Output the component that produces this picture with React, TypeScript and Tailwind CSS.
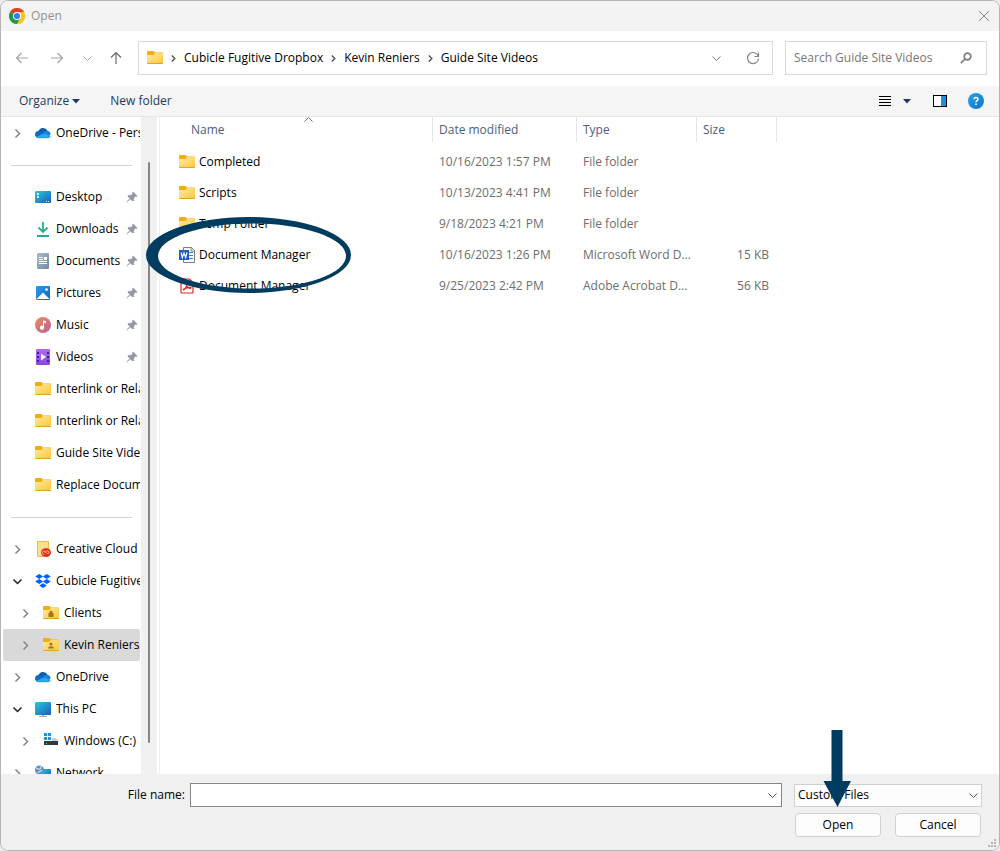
import type { ReactNode } from "react";

type IconName =
  | "onedrive"
  | "desktop"
  | "downloads"
  | "documents"
  | "pictures"
  | "music"
  | "videos"
  | "folder"
  | "creativeCloud"
  | "dropbox"
  | "lockedFolder"
  | "userFolder"
  | "pc"
  | "drive"
  | "network"
  | "word"
  | "pdf";

const folderShape = (
  <>
    <path d="M0 2a1 1 0 0 1 1-1h5.500l1.500 1.500h7a1 1 0 0 1 1 1V5H0z" fill="#f3ae0d" />
    <path d="M0 5h6.500L8 3h7a1 1 0 0 1 1 1v9a1 1 0 0 1-1 1H1a1 1 0 0 1-1-1z" fill="url(#folderFill)" />
    <path d="M0 13h16a1 1 0 0 1-1 1H1a1 1 0 0 1-1-1z" fill="#e5a323" />
  </>
);

const icons: Record<IconName, ReactNode> = {
  onedrive: (
    <>
      <path d="M3.500 6.500A4.800 4.800 0 0 1 12.500 5.800L9 9 4 10z" fill="#0a5cad" />
      <path d="M0 9.600a3.700 3.700 0 0 1 6-2.900L11 9.500 3 13a3.500 3.500 0 0 1-3-3.400z" fill="#1069c0" />
      <path d="M7.500 8.500C8.500 6 10.500 5.300 12.500 5.800A3.700 3.700 0 0 1 15.500 9.500L13 12z" fill="#1582d8" />
      <path d="M1 12 8 8.800c1-.5 2-.5 3 0l4.600 2.200c-.2 1.300-1.200 2.300-2.800 2.300H3.700C2.600 13.300 1.600 12.800 1 12z" fill="#2aa6ee" />
    </>
  ),
  desktop: (
    <>
      <rect y="2" width="16" height="12" rx="1" fill="url(#screenFill)" />
      <path d="M2 4h2v2H2zM2 7h2v2H2z" fill="#dff6ff" />
      <path d="M11 12h1v1h-1zM13 12h1v1h-1z" fill="#dff6ff" />
    </>
  ),
  downloads: (
    <path d="M8 1v10M3.500 6.500 8 11l4.500-4.500M2 15h12" fill="none" stroke="#22b08c" strokeWidth="1.800" />
  ),
  documents: (
    <>
      <rect x="2" width="12" height="16" rx="1" fill="url(#documentFill)" />
      <path d="M4 4h4v1H4zM4 6h4v1H4zM9 4h3v3H9zM4 8h8v1H4zM4 10h8v1H4z" fill="#fff" />
    </>
  ),
  pictures: (
    <>
      <rect x="1" y="1" width="14" height="14" rx="1" fill="url(#pictureFill)" />
      <path d="m1.500 14 5.800-5.800a1 1 0 0 1 1.400 0L14.500 14z" fill="#fff" />
      <circle cx="11.500" cy="4.500" r="1.300" fill="#fff" />
    </>
  ),
  music: (
    <>
      <circle cx="8" cy="8" r="8" fill="url(#musicFill)" />
      <path d="M8 3.500 11 4v2l-2-.3v5A2 2 0 1 1 8 9z" fill="#fff" />
    </>
  ),
  videos: (
    <>
      <rect x="1" width="14" height="16" rx="1" fill="url(#videoFill)" />
      <path d="M2 3h2v2H2zM2 7h2v2H2zM2 11h2v2H2zM12 3h2v2h-2zM12 7h2v2h-2zM12 11h2v2h-2z" fill="#4a1f8d" />
      <path d="M6 4.500 11 8l-5 3.500z" fill="#fff" />
    </>
  ),
  folder: folderShape,
  creativeCloud: (
    <>
      <path d="M2.500.500h11v15h-11z" fill="#fce08c" stroke="#e8bd4e" />
      <ellipse cx="11" cy="11.500" rx="5" ry="4.300" fill="#e2231a" />
      <path
        d="M9.500 13.500c-2.500 0-3-3-.7-3.500 1.500-.3 2.200 1.800 3.200 2.500 1.600 1 3-1.200 1.500-2.300-1.500-1-3 .3-3.500 1.300"
        fill="none"
        stroke="#ffd9a8"
        strokeWidth=".9"
      />
    </>
  ),
  dropbox: (
    <path
      d="m4.200 1 4 2.500-4 2.500-4-2.500zM11.800 1l4 2.500-4 2.500-4-2.500zM4.200 6l4 2.500-4 2.500-4-2.500zM11.800 6l4 2.500-4 2.500-4-2.500zM8 10.300l3.800 2.300L8 15l-3.800-2.400z"
      fill="#0061fe"
    />
  ),
  lockedFolder: (
    <>
      {folderShape}
      <path d="M5.500 8H6.500V7a1.500 1.500 0 0 1 3 0v1h1v4h-5z" fill="#a8760d" />
    </>
  ),
  userFolder: (
    <>
      {folderShape}
      <circle cx="8" cy="7" r="1.600" fill="#a8760d" />
      <path d="M5 11.500c0-3 6-3 6 0z" fill="#a8760d" />
    </>
  ),
  pc: (
    <>
      <path d="M7 12h2v3H7z" fill="#8fa3ad" />
      <path d="M4 15h8v1H4z" fill="#aab6bd" />
      <rect y="1" width="16" height="13" rx="1" fill="url(#screenFill)" />
    </>
  ),
  drive: (
    <>
      <path d="M1 0h3v3H1zM5 0h3v3H5zM1 4h3v3H1zM5 4h3v3H5z" fill="#1c93e0" />
      <path d="M9 5h4l2 3H2V8h7z" fill="#c9cdd0" />
      <rect x="1" y="8" width="14" height="4" fill="#33383c" />
      <path d="M3 10h1v1H3z" fill="#5fe06a" />
    </>
  ),
  network: (
    <>
      <rect x="4" y="4" width="12" height="9" fill="url(#screenFill)" />
      <circle cx="4.500" cy="5" r="4.500" fill="#5a93bd" />
      <path d="M1 3c2 0 2 2 4 1s0-3 2-3M3 8c0-2 3-1 4-3" fill="none" stroke="#cfe3ef" strokeWidth="1.200" />
    </>
  ),
  word: (
    <>
      <path d="M4.500.500h8l3 3v12h-11z" fill="#fff" stroke="#7d7d7d" />
      <path d="M12 .500V4h3.500" fill="none" stroke="#7d7d7d" />
      <path d="M9 5.500h5M9 8.500h5M9 11.500h5" stroke="#2f8be0" />
      <rect y="3" width="10" height="10" fill="#1f5cbf" />
      <path d="m2 5.500 1.300 5L5 6l1.700 4.500 1.300-5" fill="none" stroke="#fff" strokeWidth="1.200" />
    </>
  ),
  pdf: (
    <>
      <path d="M3 1h7.500L14 4.500V14a1 1 0 0 1-1 1H3a1 1 0 0 1-1-1V2a1 1 0 0 1 1-1z" fill="#fff" stroke="#e2231a" strokeWidth="1.200" />
      <path
        d="M4.500 12c1.500-.5 3.800-4.300 3.500-6.200-.2-1-1-.6-.7.400.5 2 2.300 4 4 4.100 1.100 0 .9-1-.3-1-2 0-4.500.7-6 1.700-.6.500-.8.900-.5 1z"
        fill="none"
        stroke="#e2231a"
        strokeWidth="1.200"
      />
    </>
  ),
};

function Icon({ name }: { name: IconName }) {
  return (
    <svg viewBox="0 0 16 16" className="h-4 w-4 shrink-0" aria-hidden="true">
      {icons[name]}
    </svg>
  );
}

function Gradients() {
  return (
    <svg className="absolute h-0 w-0" aria-hidden="true">
      <defs>
        <linearGradient id="folderFill" x2="1" y2="1">
          <stop offset="0" stopColor="#ffe9a6" />
          <stop offset="1" stopColor="#fec738" />
        </linearGradient>
        <linearGradient id="screenFill" x2="1" y2="1">
          <stop offset="0" stopColor="#2fc8e0" />
          <stop offset="1" stopColor="#1560b8" />
        </linearGradient>
        <linearGradient id="documentFill" x2="1" y2="1">
          <stop offset="0" stopColor="#a9bccb" />
          <stop offset="1" stopColor="#708aa3" />
        </linearGradient>
        <linearGradient id="pictureFill" x2="1" y2="1">
          <stop offset="0" stopColor="#2a9be8" />
          <stop offset="1" stopColor="#1264b8" />
        </linearGradient>
        <linearGradient id="musicFill" x2="1" y2="1">
          <stop offset="0" stopColor="#ee8a58" />
          <stop offset="1" stopColor="#b5629a" />
        </linearGradient>
        <linearGradient id="videoFill" x2="0" y2="1">
          <stop offset="0" stopColor="#b06cf5" />
          <stop offset="1" stopColor="#8a46e0" />
        </linearGradient>
        <linearGradient id="helpFill" x2="1" y2="1">
          <stop offset="0" stopColor="#2a9fe8" />
          <stop offset="1" stopColor="#0a78d0" />
        </linearGradient>
      </defs>
    </svg>
  );
}

function Chevron({ dir, className = "" }: { dir: "right" | "down" | "up"; className?: string }) {
  const paths = { right: "m3.500 1.500 4 4-4 4", down: "m1.500 3.500 4 4 4-4", up: "m1.500 7.500 4-4 4 4" };
  return (
    <svg viewBox="0 0 11 11" className={`h-[11px] w-[11px] shrink-0 ${className}`} fill="none" stroke="currentColor" aria-hidden="true">
      <path d={paths[dir]} />
    </svg>
  );
}

function CrumbSeparator() {
  return (
    <svg viewBox="0 0 5 7" className="ml-2 mr-2 h-[7px] w-[5px] text-[#5a5a5a]" fill="none" stroke="currentColor" strokeWidth="1.500" aria-hidden="true">
      <path d="m.8.500 3 3-3 3" />
    </svg>
  );
}

function Caret() {
  return (
    <svg viewBox="0 0 8 5" className="h-[5px] w-2 text-[#1e395b]" aria-hidden="true">
      <path d="M0 0h8L4 4.500z" fill="currentColor" />
    </svg>
  );
}

function ChromeLogo() {
  return (
    <svg viewBox="0 0 16 16" className="h-4 w-4" aria-hidden="true">
      <circle cx="8" cy="8" r="8" fill="#fcc31e" />
      <path d="M8 8 1.070 4A8 8 0 0 1 14.930 4z" fill="#e33b2e" />
      <path d="M8 8 1.070 4A8 8 0 0 0 8 16l3.500-6z" fill="#229a4c" />
      <path d="M8 4h6.930A8 8 0 0 1 8 16l3.460-6z" fill="#fcc31e" />
      <circle cx="8" cy="8" r="4" fill="#fff" />
      <circle cx="8" cy="8" r="3.100" fill="#3b7ded" />
    </svg>
  );
}

function Pin() {
  return (
    <svg viewBox="0 0 12 12" className="h-3 w-3 shrink-0 text-[#8f9aa3]" aria-hidden="true">
      <path d="M7 .5 11.500 5l-1.200.800-.8-.3-1.700 1.700.2 2.300-1.200 1L4.500 8.200 1 11.300l-.5-.5L3.800 7.500 1.500 5.200l1-1.200 2.300.2 1.700-1.700-.3-.8z" fill="currentColor" />
    </svg>
  );
}

type NavItem = {
  label: string;
  icon: IconName;
  pinned?: boolean;
  expand?: "closed" | "open";
  child?: boolean;
  selected?: boolean;
};

const navGroups: NavItem[][] = [
  [{ label: "OneDrive - Personal", icon: "onedrive", expand: "closed" }],
  [
    { label: "Desktop", icon: "desktop", pinned: true },
    { label: "Downloads", icon: "downloads", pinned: true },
    { label: "Documents", icon: "documents", pinned: true },
    { label: "Pictures", icon: "pictures", pinned: true },
    { label: "Music", icon: "music", pinned: true },
    { label: "Videos", icon: "videos", pinned: true },
    { label: "Interlink or Related", icon: "folder" },
    { label: "Interlink or Related", icon: "folder" },
    { label: "Guide Site Videos", icon: "folder" },
    { label: "Replace Document", icon: "folder" },
  ],
  [
    { label: "Creative Cloud Files", icon: "creativeCloud", expand: "closed" },
    { label: "Cubicle Fugitive Dropbox", icon: "dropbox", expand: "open" },
    { label: "Clients", icon: "lockedFolder", expand: "closed", child: true },
    { label: "Kevin Reniers", icon: "userFolder", expand: "closed", child: true, selected: true },
    { label: "OneDrive", icon: "onedrive", expand: "closed" },
    { label: "This PC", icon: "pc", expand: "open" },
    { label: "Windows (C:)", icon: "drive", expand: "closed", child: true },
    { label: "Network", icon: "network", expand: "closed" },
  ],
];

const files: { name: string; icon: IconName; modified: string; type: string; size: string }[] = [
  { name: "Completed", icon: "folder", modified: "10/16/2023 1:57 PM", type: "File folder", size: "" },
  { name: "Scripts", icon: "folder", modified: "10/13/2023 4:41 PM", type: "File folder", size: "" },
  { name: "Temp Folder", icon: "folder", modified: "9/18/2023 4:21 PM", type: "File folder", size: "" },
  { name: "Document Manager", icon: "word", modified: "10/16/2023 1:26 PM", type: "Microsoft Word D...", size: "15 KB" },
  { name: "Document Manager", icon: "pdf", modified: "9/25/2023 2:42 PM", type: "Adobe Acrobat D...", size: "56 KB" },
];

const crumbs = ["Cubicle Fugitive Dropbox", "Kevin Reniers", "Guide Site Videos"];

function TitleBar() {
  return (
    <header className="flex h-[30px] shrink-0 items-center bg-[#f3f3f3] pl-2 pr-[7px]">
      <ChromeLogo />
      <h1 className="ml-1.5 flex-1 text-[#919191]">Open</h1>
      <button type="button" aria-label="Close" className="flex h-4 w-4 items-center justify-center text-[#868686]">
        <svg viewBox="0 0 12 12" className="h-3 w-3" fill="none" stroke="currentColor" aria-hidden="true">
          <path d="m1 1 10 10M11 1 1 11" />
        </svg>
      </button>
    </header>
  );
}

function AddressBar() {
  return (
    <div className="flex h-[55px] shrink-0 items-center pb-px pl-3.5 pr-3">
      <button type="button" aria-label="Back" className="text-[#a3a3a3]">
        <svg viewBox="0 0 14 14" className="h-3.5 w-3.5" fill="none" stroke="currentColor" strokeWidth="1.200" aria-hidden="true">
          <path d="M13 7H1.500M6.500 2l-5 5 5 5" />
        </svg>
      </button>
      <button type="button" aria-label="Forward" className="ml-[21px] text-[#a3a3a3]">
        <svg viewBox="0 0 14 14" className="h-3.5 w-3.5" fill="none" stroke="currentColor" strokeWidth="1.200" aria-hidden="true">
          <path d="M1 7h11.500M7.500 2l5 5-5 5" />
        </svg>
      </button>
      <button type="button" aria-label="Recent locations" className="ml-[18px] text-[#a3a3a3]">
        <Chevron dir="down" />
      </button>
      <button type="button" aria-label="Up one level" className="ml-4 text-[#6b6b6b]">
        <svg viewBox="0 0 14 14" className="h-3.5 w-3.5" fill="none" stroke="currentColor" strokeWidth="1.200" aria-hidden="true">
          <path d="M7 13V1.500M2 6.500l5-5 5 5" />
        </svg>
      </button>

      <nav aria-label="Address" className="ml-[15px] flex h-[34px] min-w-0 flex-1 items-center border border-[#d9d9d9] pl-2 pr-3">
        <Icon name="folder" />
        {crumbs.map((crumb) => (
          <span key={crumb} className="flex items-center whitespace-nowrap">
            <CrumbSeparator />
            <a href="#" className="text-black">
              {crumb}
            </a>
          </span>
        ))}
        <span className="flex-1" />
        <button type="button" aria-label="Previous locations" className="text-[#777]">
          <Chevron dir="down" />
        </button>
        <button type="button" aria-label="Refresh" className="ml-6 text-[#868686]">
          <svg viewBox="0 0 14 14" className="h-3.5 w-3.5" fill="none" stroke="currentColor" strokeWidth="1.200" aria-hidden="true">
            <path d="M12.300 5.500A5.500 5.500 0 1 0 12.500 7.500M12.500 1.500v4h-4" />
          </svg>
        </button>
      </nav>

      <div className="ml-3 flex h-[34px] w-[202px] items-center border border-[#d9d9d9] pl-2 pr-3.5">
        <input
          type="search"
          aria-label="Search Guide Site Videos"
          placeholder="Search Guide Site Videos"
          className="min-w-0 flex-1 outline-none placeholder:text-[#767676]"
        />
        <svg viewBox="0 0 12 12" className="h-3 w-3 shrink-0 text-[#7d7d7d]" fill="none" stroke="currentColor" strokeWidth="1.700" aria-hidden="true">
          <circle cx="7.500" cy="4.500" r="3.300" />
          <path d="M5 7 .800 11.200" />
        </svg>
      </div>
    </div>
  );
}

function Toolbar() {
  return (
    <div className="flex h-[31px] shrink-0 items-center border-b border-[#e5e5e5] bg-[#f5f5f5] pl-[18px] pr-[15px] text-[#1e395b]">
      <button type="button" className="flex items-center gap-[3px]">
        Organize
        <Caret />
      </button>
      <button type="button" className="ml-[30px]">
        New folder
      </button>
      <span className="flex-1" />
      <button type="button" aria-label="Change your view" className="text-black">
        <svg viewBox="0 0 12 12" className="h-3 w-3" stroke="currentColor" aria-hidden="true">
          <path d="M0 1.500h12M0 4.500h12M0 7.500h12M0 10.500h12" />
        </svg>
      </button>
      <button type="button" aria-label="More view options" className="ml-3">
        <Caret />
      </button>
      <button type="button" aria-label="Show the preview pane" className="ml-[22px]">
        <svg viewBox="0 0 14 12" className="h-3 w-3.5" aria-hidden="true">
          <rect x=".5" y=".5" width="13" height="11" fill="#fff" stroke="#000" />
          <path d="M8 1h5v10H8z" fill="#1c90de" />
        </svg>
      </button>
      <button type="button" aria-label="Get help" className="ml-[21px]">
        <svg viewBox="0 0 16 16" className="h-4 w-4" aria-hidden="true">
          <circle cx="8" cy="8" r="8" fill="url(#helpFill)" />
          <path d="M6 6.200c.1-2.400 4-2.200 4 0 0 1.400-2 1.500-2 3.100" fill="none" stroke="#fff" strokeWidth="1.500" />
          <path d="M7.200 10.500h1.600v1.600H7.200z" fill="#fff" />
        </svg>
      </button>
    </div>
  );
}

function NavRow({ item }: { item: NavItem }) {
  return (
    <li className={`ml-0.5 flex h-8 items-center rounded-xs ${item.child ? "pl-[17px]" : "pl-[9px]"} ${item.selected ? "bg-[#d9d9d9]" : ""}`}>
      <span className="flex w-[23px] shrink-0">
        {item.expand === "closed" && (
          <Chevron dir="right" className="stroke-[1.500] text-[#858585]" />
        )}
        {item.expand === "open" && (
          <Chevron dir="down" className="stroke-[1.500] text-[#222]" />
        )}
      </span>
      <Icon name={item.icon} />
      <a href="#" className="ml-[5px] min-w-0 flex-1 overflow-hidden whitespace-nowrap text-black">
        {item.label}
      </a>
      {item.pinned && (
        <span className="mr-0.5">
          <Pin />
        </span>
      )}
    </li>
  );
}

function Sidebar() {
  return (
    <aside className="flex w-[156px] shrink-0">
      <nav aria-label="Folders" className="min-w-0 flex-1 overflow-hidden pr-px">
        {navGroups.map((group, index) => (
          <div key={index}>
            {index > 0 && (
              <div className="ml-2.5 mr-2 flex h-8 items-center">
                <hr className="flex-1 border-[#d4d4d4]" />
              </div>
            )}
            <ul>
              {group.map((item, i) => (
                <NavRow key={i} item={item} />
              ))}
            </ul>
          </div>
        ))}
      </nav>
      <div className="flex w-4 justify-center bg-[#f0f0f0] pb-[31px] pt-[45px]">
        <div className="w-0.5 rounded-full bg-[#868686]" />
      </div>
    </aside>
  );
}

function HeaderCell({ children }: { children?: ReactNode }) {
  return (
    <th scope="col" className="h-[29px] p-0 text-left align-top font-normal">
      <div className="flex h-[25px] items-center border-l border-[#e5e5e5] pl-1.5">{children}</div>
    </th>
  );
}

function FileList() {
  return (
    <main className="relative ml-0.5 min-w-0 flex-1 border-l border-[#f0f0f0]">
      <table className="w-full table-fixed border-separate border-spacing-0 text-[#6d6d6d]">
        <colgroup>
          <col className="w-[272px]" />
          <col className="w-36" />
          <col className="w-[120px]" />
          <col className="w-20" />
          <col />
        </colgroup>
        <thead className="text-[#4c607a]">
          <tr>
            <th scope="col" aria-sort="ascending" className="relative h-[29px] p-0 text-left align-top font-normal">
              <div className="flex h-[25px] items-center pl-[31px]">Name</div>
              <Chevron dir="up" className="absolute left-[143px] top-[-3px] text-[#6d6d6d]" />
            </th>
            <HeaderCell>Date modified</HeaderCell>
            <HeaderCell>Type</HeaderCell>
            <HeaderCell>Size</HeaderCell>
            <HeaderCell />
          </tr>
        </thead>
        <tbody>
          {files.map((file) => (
            <tr key={file.modified} className="h-[31px]">
              <td className="p-0 pl-[19px]">
                <div className="flex items-center gap-1 text-black">
                  <Icon name={file.icon} />
                  {file.name}
                </div>
              </td>
              <td className="whitespace-nowrap p-0 pl-[7px]">{file.modified}</td>
              <td className="whitespace-nowrap p-0 pl-[7px]">{file.type}</td>
              <td className="p-0 pr-[7px] text-right">{file.size}</td>
              <td />
            </tr>
          ))}
        </tbody>
      </table>

      {/* ring drawn around the Word document row */}
      <svg viewBox="0 0 205 76" className="pointer-events-none absolute left-[-14px] top-[100px] h-[76px] w-[205px] text-[#003c5f]" aria-hidden="true">
        <path
          fillRule="evenodd"
          fill="currentColor"
          d="M0 38a102.500 38 0 0 1 205 0a102.500 38 0 0 1-205 0zM12 39a94 32.500 0 0 0 188 0a94 32.500 0 0 0-188 0z"
        />
      </svg>
    </main>
  );
}

function Footer() {
  return (
    <footer className="relative flex h-[76px] shrink-0 flex-col gap-1.5 bg-[#f0f0f0] pl-3 pr-[17px] pt-[9px] text-black">
      <div className="flex items-center">
        <label htmlFor="file-name" className="w-[172px] text-right">
          File name:
        </label>
        <div className="ml-[5px] flex h-6 min-w-0 flex-1 items-center border border-[#868686] bg-white pr-[3px]">
          <input id="file-name" type="text" className="h-full min-w-0 flex-1 px-1 outline-none" />
          <button type="button" aria-label="Previous file names" className="text-[#555]">
            <Chevron dir="down" />
          </button>
        </div>
        <div className="relative ml-3 w-[188px]">
          <select aria-label="File type" className="block h-[23px] w-full appearance-none border border-[#cfcfcf] bg-[#fdfdfd] px-[3px] py-0">
            <option>Custom Files</option>
          </select>
          <Chevron dir="down" className="pointer-events-none absolute right-[3px] top-1.5 text-[#555]" />
        </div>
      </div>
      <div className="flex justify-end gap-3.5 pr-px">
        <div className="relative">
          <button type="button" className="h-6 w-[86px] rounded-sm border border-[#d0d0d0] bg-[#fdfdfd]">
            Open
          </button>
          {/* arrow pointing down at the Open button */}
          <svg viewBox="0 0 28 77" className="pointer-events-none absolute bottom-[30px] left-7 h-[77px] w-7 text-[#003c5f]" aria-hidden="true">
            <path d="M8.500 0h11v51H28L14.500 77 .5 51h8z" fill="currentColor" />
          </svg>
        </div>
        <button type="button" className="h-6 w-[86px] rounded-sm border border-[#d0d0d0] bg-[#fdfdfd]">
          Cancel
        </button>
      </div>
      <svg viewBox="0 0 9 9" className="absolute bottom-0.5 right-0.5 h-[9px] w-[9px] text-[#b5b5b5]" aria-hidden="true">
        <path d="M6 0h2v2H6zM3 3h2v2H3zM6 3h2v2H6zM0 6h2v2H0zM3 6h2v2H3zM6 6h2v2H6z" fill="currentColor" />
      </svg>
    </footer>
  );
}

export default function App() {
  return (
    <div className="h-screen bg-[#ececec] font-['Open_Sans','Noto_Sans',sans-serif] text-xs">
      <Gradients />
      <div className="flex h-full flex-col overflow-hidden rounded-lg border border-[#b5b5b5] bg-white">
        <TitleBar />
        <AddressBar />
        <Toolbar />
        <div className="flex min-h-0 flex-1">
          <Sidebar />
          <FileList />
        </div>
        <Footer />
      </div>
    </div>
  );
}
